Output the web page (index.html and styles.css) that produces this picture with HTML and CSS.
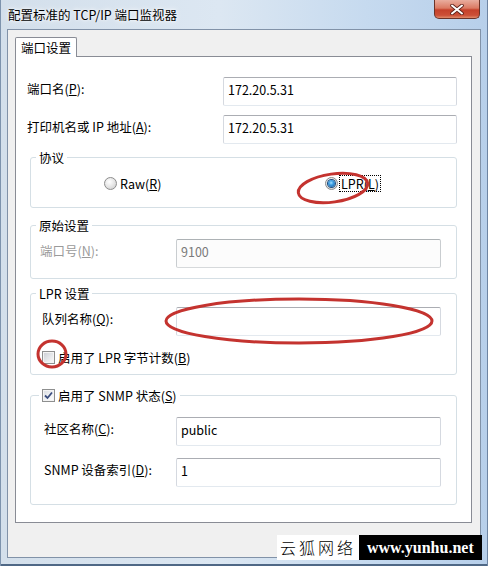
FILE: index.html
```html
<!DOCTYPE html>
<html lang="zh-CN">
<head>
<meta charset="utf-8">
<title>配置标准的 TCP/IP 端口监视器</title>
<link rel="stylesheet" href="styles.css">
</head>
<body>
<div class="window">
  <div class="titlebar">
    <span class="title">配置标准的 TCP/IP 端口监视器</span>
    <div class="close">
      <svg width="14" height="11" viewBox="0 0 14 11"><path d="M2 1.5 L12 9.5 M12 1.5 L2 9.5" stroke="#5a2018" stroke-width="3.6" stroke-linecap="round"/><path d="M2 1.5 L12 9.5 M12 1.5 L2 9.5" stroke="#fff" stroke-width="2" stroke-linecap="round"/></svg>
    </div>
  </div>
  <div class="client">
    <div class="tabs"><div class="tab">端口设置</div></div>
    <div class="panel">
      <div class="row field-row">
        <span class="lbl">端口名(<u>P</u>):</span>
        <div class="input w234">172.20.5.31</div>
      </div>
      <div class="row field-row second">
        <span class="lbl">打印机名或 IP 地址(<u>A</u>):</span>
        <div class="input w234">172.20.5.31</div>
      </div>

      <div class="group proto">
        <span class="legend">协议</span>
        <div class="radios">
          <div class="opt raw"><span class="radio"></span><span class="opt-text">Raw(<u>R</u>)</span></div>
          <div class="opt"><span class="radio on"><span class="dot"></span></span><span class="opt-text focus">LPR(<u>L</u>)</span></div>
        </div>
      </div>

      <div class="group rawset">
        <span class="legend">原始设置</span>
        <div class="row grp-row">
          <span class="lbl disabled">端口号(<u>N</u>):</span>
          <div class="input w264 dis">9100</div>
        </div>
      </div>

      <div class="group lpr">
        <span class="legend">LPR 设置</span>
        <div class="row grp-row pl11">
          <span class="lbl">队列名称(<u>Q</u>):</span>
          <div class="input w264"></div>
        </div>
        <div class="check-row">
          <span class="cb"></span><span>启用了 LPR 字节计数(<u>B</u>)</span>
        </div>
      </div>

      <div class="group snmp">
        <span class="legend cb-legend"><span class="cb checked"><svg width="11" height="11" viewBox="0 0 11 11"><path d="M2 5.5 L4.5 8 L9 2.5" fill="none" stroke="#3b4d7e" stroke-width="1.8"/></svg></span><span>启用了 SNMP 状态(<u>S</u>)</span></span>
        <div class="row grp-row pl13 first">
          <span class="lbl">社区名称(<u>C</u>):</span>
          <div class="input w264">public</div>
        </div>
        <div class="row grp-row pl13 next">
          <span class="lbl">SNMP 设备索引(<u>D</u>):</span>
          <div class="input w264">1</div>
        </div>
      </div>
    </div>
  </div>

  <svg class="marks" width="488" height="566" viewBox="0 0 488 566">
    <ellipse cx="333" cy="188" rx="35" ry="14" transform="rotate(-8 333 188)"/>
    <ellipse cx="299" cy="321" rx="133" ry="22"/>
    <ellipse cx="52" cy="354" rx="14" ry="13"/>
  </svg>

  <div class="watermark">
    <span class="wm-cn">云狐网络</span>
    <span class="wm-en">www.yunhu.net</span>
  </div>
</div>
</body>
</html>
```
FILE: styles.css
```css
* { box-sizing: border-box; }

body {
  margin: 0;
  font-family: "Noto Sans CJK SC", "Microsoft YaHei", sans-serif;
  font-size: 12.5px;
  color: #000;
}

u { text-decoration: underline; text-underline-offset: 1px; }

.window {
  position: relative;
  width: 488px;
  height: 566px;
  overflow: hidden;
  background: linear-gradient(90deg, #d3dfeb 0%, #dce7f2 45%, #c6daef 75%, #b7cfea 100%);
  box-shadow: inset 1px 0 0 #7d93ad, inset -1px 0 0 #6d84a2, inset 0 -2px 0 #4f6886;
}

.titlebar {
  height: 29px;
  display: flex;
  justify-content: space-between;
  align-items: flex-start;
  padding: 0 8px;
}

.title {
  font-size: 12.5px;
  line-height: 29px;
  text-shadow: 0 0 6px #fff, 0 0 3px #fff;
}

.close {
  width: 46px;
  height: 19px;
  border: 1px solid #6b3328;
  border-top: none;
  border-radius: 0 0 5px 5px;
  background: linear-gradient(#e9ad9e 0%, #db7a63 45%, #c5412b 55%, #cc5037 85%, #e08b6b 100%);
  display: flex;
  align-items: center;
  justify-content: center;
}

.client {
  margin-left: 7px;
  width: 474px;
  height: 529px;
  border: 1px solid #8192a8;
  background: #f0f0f0;
}

.tabs {
  display: flex;
  padding: 7px 0 0 7px;
}

.tab {
  width: 62px;
  height: 20px;
  border: 1px solid #898c95;
  border-bottom: none;
  border-radius: 2px 2px 0 0;
  background: #fff;
  margin-bottom: -1px;
  position: relative;
  z-index: 1;
  text-align: center;
  line-height: 19px;
}

.panel {
  margin-left: 7px;
  width: 457px;
  height: 467px;
  border: 1px solid #898c95;
  background: #fff;
  padding-top: 20px;
}

.row {
  display: flex;
  align-items: flex-start;
  height: 29px;
}

.field-row { padding: 0 14px 0 11px; }
.field-row.second { margin-top: 9px; }

.lbl {
  flex: 1;
  line-height: 23px;
  white-space: nowrap;
}

.lbl.disabled { color: #9a9a9a; }

.input {
  height: 29px;
  border: 1px solid;
  border-color: #abadb3 #d5d9e0 #e3e9ef #d5d9e0;
  border-radius: 2px;
  padding: 0 4px;
  line-height: 23px;
  background: #fff;
}

.input.dis {
  border-color: #adb2b5 #c9cdd0 #d6d9db #c9cdd0;
  color: #7a7a7a;
  background: #fcfcfc;
}

.w234 { width: 234px; }
.w264 { width: 265px; }

.group {
  border: 1px solid #d5dfe5;
  border-radius: 3px;
  margin: 0 14px 0 14px;
}

.legend {
  display: block;
  width: max-content;
  margin: -9px 0 0 5px;
  padding: 0 3px;
  background: #fff;
  line-height: 17px;
}

.proto { margin-top: 13px; height: 51px; }

.radios {
  display: flex;
  align-items: center;
  height: 16px;
  margin-top: 9px;
  padding-left: 73px;
}

.opt { display: flex; align-items: center; }
.opt.raw { width: 221px; }
.opt-text { margin-left: 3px; line-height: 15px; }

.radio {
  width: 13px;
  height: 13px;
  border-radius: 50%;
  border: 1px solid #8c8c8c;
  background: radial-gradient(circle at 40% 35%, #ffffff 0%, #e8e8e8 45%, #c9c9c9 100%);
  display: flex;
  align-items: center;
  justify-content: center;
}

.dot {
  width: 7px;
  height: 7px;
  border-radius: 50%;
  background: radial-gradient(circle at 45% 40%, #9fe0ff 0%, #3a9be0 40%, #17508f 100%);
  box-shadow: 0 0 0 1px #1d4d7e;
}

.focus {
  border: 1px dotted #000;
  padding: 0 1px;
  margin-left: 1px;
}

.rawset { margin-top: 17px; height: 54px; }
.lpr { margin-top: 14px; height: 82px; }
.snmp { margin-top: 20px; height: 110px; }

.grp-row { margin-top: 5px; padding: 0 15px 0 9px; }
.grp-row.pl11 { padding-left: 11px; }
.grp-row.pl13 { padding-left: 13px; }
.grp-row.first { margin-top: 13px; }
.grp-row.next { margin-top: 12px; }

.check-row {
  display: flex;
  align-items: center;
  gap: 3px;
  height: 14px;
  margin-top: 14px;
  padding-left: 11px;
}

.cb {
  width: 13px;
  height: 13px;
  border: 1px solid #8e8f8f;
  background: linear-gradient(135deg, #c9cdd3 0%, #e4e6e9 50%, #fbfbfb 100%);
  box-shadow: inset 0 0 0 1px #f4f4f4;
  display: flex;
  align-items: center;
  justify-content: center;
  flex: none;
}

.cb.checked {
  background: linear-gradient(135deg, #d8dbe0 0%, #eef0f2 50%, #ffffff 100%);
}

.cb-legend {
  display: flex;
  align-items: center;
  gap: 3px;
  margin-left: 8px;
  padding-left: 3px;
}

.marks {
  position: absolute;
  left: 0;
  top: 0;
  pointer-events: none;
}

.marks ellipse {
  fill: none;
  stroke: #c4332f;
  stroke-width: 3;
}

.watermark {
  position: absolute;
  left: 277px;
  top: 535px;
  display: flex;
  height: 25px;
}

.wm-cn {
  width: 82px;
  background: #fff;
  font-size: 16px;
  letter-spacing: 3px;
  line-height: 25px;
  padding-left: 3px;
  font-weight: 300;
  white-space: nowrap;
  overflow: hidden;
}

.wm-en {
  width: 123px;
  background: #000;
  color: #fff;
  font-family: "Liberation Serif", serif;
  font-weight: bold;
  font-size: 16px;
  line-height: 25px;
  padding-left: 8px;
  white-space: nowrap;
}
```
